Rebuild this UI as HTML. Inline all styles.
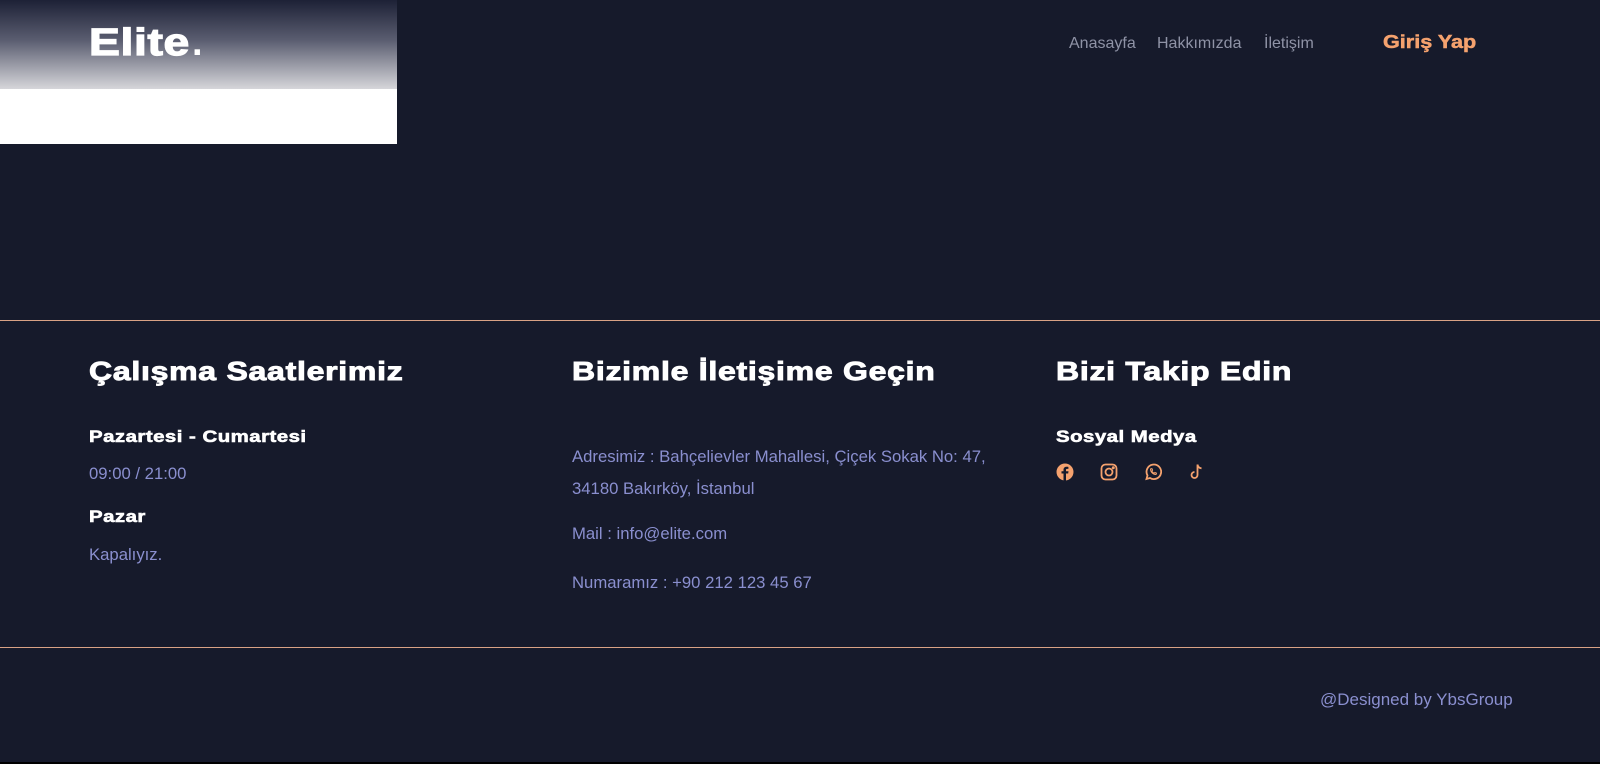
<!DOCTYPE html>
<html><head><meta charset="utf-8"><style>
body{margin:0;width:1600px;height:764px;background:#161a2b;font-family:"Liberation Sans",sans-serif;position:relative;overflow:hidden}
.logo{position:absolute;left:0;top:0;width:397px;height:144px;background:#fff}
.logo .g{height:89px;background:linear-gradient(#1d2136,#5a5d70 45%,#d6d6da)}
.el{position:absolute;left:89px;top:22px;color:#fff;font-weight:900;font-size:38px;letter-spacing:0.5px;-webkit-text-stroke:1.2px #fff;transform-origin:left;transform:scaleX(1.22)}
.nav{position:absolute;top:35px;color:#8f93a6;font-size:16px}
.h{position:absolute;color:#fff;font-weight:900;font-size:26px;letter-spacing:0.6px;transform-origin:left;transform:scaleX(1.23);-webkit-text-stroke:0.9px #fff}
.s{position:absolute;color:#fff;font-weight:900;font-size:17px;letter-spacing:0.4px;transform-origin:left;transform:scaleX(1.2);-webkit-text-stroke:0.6px #fff}
.t{position:absolute;color:#8a8fcf;font-size:16.7px}
.line{position:absolute;left:0;width:1600px;height:1px;background:#d9a285}
.ic{position:absolute;top:463px}
</style></head><body>
<div class="logo"><div class="g"></div><span class="el">Elite</span><span style="position:absolute;left:192px;top:22px;color:#fff;font-weight:900;font-size:38px">.</span></div>
<div class="nav" style="left:1069px">Anasayfa</div>
<div class="nav" style="left:1157px">Hakkımızda</div>
<div class="nav" style="left:1264px">İletişim</div>
<div style="position:absolute;left:1383px;top:32px;color:#f5a26e;font-weight:900;font-size:18px;transform-origin:left;transform:scaleX(1.2);-webkit-text-stroke:0.5px #f5a26e">Giriş Yap</div>
<div class="line" style="top:320px"></div>
<div class="h" style="left:89px;top:356px">Çalışma Saatlerimiz</div>
<div class="s" style="left:89px;top:427px">Pazartesi - Cumartesi</div>
<div class="t" style="left:89px;top:464px">09:00 / 21:00</div>
<div class="s" style="left:89px;top:507px">Pazar</div>
<div class="t" style="left:89px;top:545px">Kapalıyız.</div>
<div class="h" style="left:572px;top:356px">Bizimle İletişime Geçin</div>
<div class="t" style="left:572px;top:441px;line-height:32px">Adresimiz : Bahçelievler Mahallesi, Çiçek Sokak No: 47,<br>34180 Bakırköy, İstanbul</div>
<div class="t" style="left:572px;top:524px">Mail : info@elite.com</div>
<div class="t" style="left:572px;top:573px">Numaramız : +90 212 123 45 67</div>
<div class="h" style="left:1056px;top:356px">Bizi Takip Edin</div>
<div class="s" style="left:1056px;top:427px">Sosyal Medya</div>
<svg class="ic" style="left:1056px" width="18" height="18" viewBox="0 0 18 18"><circle cx="9" cy="9" r="8.5" fill="#f5a26e"/><path d="M10 18V10.5h2.2l.3-2.3H10V7c0-.7.2-1.1 1.1-1.1h1.3V3.9c-.3 0-1-.1-1.9-.1-1.9 0-3 1.1-3 3.2v1.2H5.5v2.3h2V18z" fill="#161a2b"/></svg>
<svg class="ic" style="left:1100px" width="18" height="18" viewBox="0 0 18 18" fill="none" stroke="#f5a26e" stroke-width="1.8"><rect x="1.5" y="1.5" width="15" height="15" rx="4"/><circle cx="9" cy="9" r="3.5"/><circle cx="13.3" cy="4.7" r=".6" fill="#f5a26e"/></svg>
<svg class="ic" style="left:1144px" width="18" height="18" viewBox="0 0 18 18" fill="none" stroke="#f5a26e" stroke-width="1.8"><path d="M2.5 16l1-3.6A7.3 7.3 0 1 1 6 15z"/><path d="M6.5 6c0 3 2.5 5.5 5.5 5.5l.5-1.3-1.6-.7-.8.8c-1-.5-1.8-1.3-2.3-2.3l.8-.8-.7-1.6z" stroke-width="1"/></svg>
<svg class="ic" style="left:1188px" width="18" height="18" viewBox="0 0 18 18" fill="none" stroke="#f5a26e" stroke-width="1.8"><path d="M9.5 1.5v10.5a3 3 0 1 1-3-3M9.5 1.5c.3 2.2 1.8 3.6 4 3.8"/></svg>
<div class="line" style="top:647px"></div>
<div class="t" style="left:1320px;top:690px;font-size:17px">@Designed by YbsGroup</div>
<div style="position:absolute;left:0;top:762px;width:1600px;height:2px;background:#000"></div>
</body></html>
